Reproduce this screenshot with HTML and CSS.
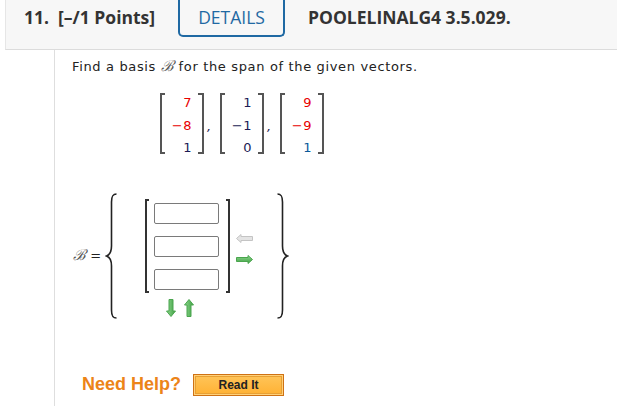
FILE: index.html
```html
<!DOCTYPE html>
<html>
<head>
<meta charset="utf-8">
<link rel="stylesheet" href="styles.css">
</head>
<body>
<div class="header">
  <span class="hnum">11.</span>
  <span class="hpts">[–/1 Points]</span>
  <span class="details">DETAILS</span>
  <span class="hcode">POOLELINALG4 3.5.029.</span>
</div>
<div class="content">
  <p class="question">Find a basis <span class="scriptb">ℬ</span> for the span of the given vectors.</p>
  <div class="vectors">
    <div class="matrix">
      <span class="lb"></span>
      <div class="col"><span class="red">7</span><span class="red">−8</span><span class="navy">1</span></div>
      <span class="rb"></span>
    </div>
    <span class="comma">,</span>
    <div class="matrix">
      <span class="lb"></span>
      <div class="col"><span class="navy">1</span><span class="navy">−1</span><span class="navy">0</span></div>
      <span class="rb"></span>
    </div>
    <span class="comma">,</span>
    <div class="matrix">
      <span class="lb"></span>
      <div class="col"><span class="red">9</span><span class="red">−9</span><span class="blue">1</span></div>
      <span class="rb"></span>
    </div>
  </div>
  <div class="answer">
    <div class="label"><span class="scriptb">ℬ</span> <span class="eq">=</span></div>
    <svg class="brace" width="14" height="126" viewBox="0 0 14 126"><path d="M11.5 1 C7.5 1 6.5 3.5 6.5 9 L6.5 53 C6.5 59 4.5 62 1.5 63 C4.5 64 6.5 67 6.5 73 L6.5 117 C6.5 122.5 7.5 125 11.5 125" fill="none" stroke="#222" stroke-width="1.6"/></svg>
    <div class="block">
      <div class="brow">
        <div class="bracket">
          <span class="blb"></span>
          <div class="inputs">
            <span class="box"></span>
            <span class="box"></span>
            <span class="box"></span>
          </div>
          <span class="brb"></span>
        </div>
        <div class="sidearrows">
          <svg width="17" height="9" viewBox="0 0 17 9"><path d="M0.5 4.5 L5 0.5 L5 2.5 L16.5 2.5 L16.5 6.5 L5 6.5 L5 8.5 Z" fill="#e4e4e4" stroke="#c4c4c4" stroke-width="1"/></svg>
          <svg width="17" height="9" viewBox="0 0 17 9"><defs><linearGradient id="gr" x1="0" y1="0" x2="0" y2="1"><stop offset="0" stop-color="#8fd88f"/><stop offset="1" stop-color="#3f9f43"/></linearGradient></defs><path d="M16.5 4.5 L12 0.5 L12 2.5 L0.5 2.5 L0.5 6.5 L12 6.5 L12 8.5 Z" fill="url(#gr)" stroke="#4aa54e" stroke-width="1"/></svg>
        </div>
      </div>
      <div class="updown">
        <svg width="10" height="18" viewBox="0 0 10 18"><defs><linearGradient id="gv" x1="0" y1="0" x2="1" y2="0"><stop offset="0" stop-color="#8fd88f"/><stop offset="1" stop-color="#3f9f43"/></linearGradient></defs><path d="M5 17.5 L0.5 12 L3 12 L3 0.5 L7 0.5 L7 12 L9.5 12 Z" fill="url(#gv)" stroke="#4aa54e" stroke-width="1"/></svg>
        <svg width="10" height="18" viewBox="0 0 10 18"><path d="M5 0.5 L0.5 6 L3 6 L3 17.5 L7 17.5 L7 6 L9.5 6 Z" fill="url(#gv)" stroke="#4aa54e" stroke-width="1"/></svg>
      </div>
    </div>
    <svg class="brace rbrace" width="14" height="126" viewBox="0 0 14 126"><path d="M2.5 1 C6.5 1 7.5 3.5 7.5 9 L7.5 53 C7.5 59 9.5 62 12.5 63 C9.5 64 7.5 67 7.5 73 L7.5 117 C7.5 122.5 6.5 125 2.5 125" fill="none" stroke="#222" stroke-width="1.6"/></svg>
  </div>
  <div class="help">
    <span class="needhelp">Need Help?</span>
    <span class="readit">Read It</span>
  </div>
</div>
</body>
</html>
```

FILE: styles.css
```css
html, body {
  margin: 0;
  padding: 0;
  background: #fff;
}
body {
  width: 617px;
  height: 406px;
  overflow: hidden;
}
.header {
  margin-left: 5px;
  height: 49px;
  background: #f7f7f7;
  border-left: 1px solid #e6e6e6;
  border-bottom: 1px solid #dcdcdc;
  display: flex;
  align-items: flex-start;
  font-family: "Open Sans", sans-serif;
  font-size: 17.5px;
  color: #333;
  white-space: nowrap;
}
.hnum, .hpts, .hcode {
  font-weight: 700;
  line-height: 34px;
}
.hnum { margin-left: 18px; width: 34px; flex-shrink: 0; }
.hpts { width: 120px; flex-shrink: 0; }
.details {
  width: 103px;
  flex-shrink: 0;
  text-align: center;
  color: #1f69a3;
  font-weight: 400;
  line-height: 34px;
  padding-bottom: 1px;
  border: 2px solid #1f69a3;
  border-top: 0;
  border-radius: 0 0 5px 5px;
}
.hcode { margin-left: 23px; }

.content {
  margin-left: 54px;
  border-left: 1px solid #dedede;
  height: 356px;
  font-family: "DejaVu Sans", Verdana, sans-serif;
  font-size: 13px;
  color: #222;
}
.question {
  margin: 0;
  padding: 7px 0 0 17px;
  line-height: 18px;
  letter-spacing: 0.65px;
  white-space: nowrap;
}
.scriptb {
  color: #555;
  font-family: "DejaVu Serif", serif;
  font-style: italic;
  font-weight: 400;
  font-size: 15px;
  letter-spacing: 0;
}
.vectors {
  display: flex;
  align-items: flex-start;
  margin: 16px 0 0 105px;
}
.matrix {
  display: flex;
  align-items: flex-start;
}
.lb, .rb {
  margin-top: 1px;
  height: 57px;
  border: 2px solid #555;
}
.lb { width: 3px; border-right: 0; }
.rb { width: 4px; border-left: 0; }
.col {
  width: 27px;
  padding-right: 6px;
  display: flex;
  flex-direction: column;
  align-items: flex-end;
  line-height: 22.5px;
  letter-spacing: 0.5px;
}
.red { color: #e80000; }
.navy { color: #1c1c55; }
.blue { color: #0a5a9a; }
.comma {
  width: 16px;
  padding-left: 3px;
  box-sizing: border-box;
  color: #1c1c55;
  font-style: italic;
  line-height: 22.5px;
  margin-top: 24px;
}
.answer {
  display: flex;
  align-items: flex-start;
  margin: 33px 0 0 18px;
}
.label {
  margin-top: 52px;
  line-height: 20px;
  width: 32px;
  white-space: nowrap;
}
.eq { color: #222; }
.brace { display: block; }
.block {
  margin: 6px 0 0 26px;
  display: flex;
  flex-direction: column;
}
.brow {
  display: flex;
  align-items: center;
}
.bracket {
  display: flex;
  align-items: stretch;
}
.blb, .brb {
  width: 2px;
  border: 2px solid #333;
}
.blb { border-right: 0; }
.brb { border-left: 0; }
.inputs {
  display: flex;
  flex-direction: column;
  gap: 12px;
  padding: 4px 7px 3px 5px;
}
.box {
  display: block;
  width: 63px;
  height: 19px;
  border: 1px solid #7a7a7a;
  border-radius: 2px;
  background: #fff;
}
.sidearrows {
  display: flex;
  flex-direction: column;
  gap: 12px;
  margin: 7px 0 0 6px;
}
.sidearrows svg { display: block; }
.updown {
  display: flex;
  gap: 8px;
  margin: 6px 0 0 21px;
}
.updown svg { display: block; }
.rbrace { margin-left: 22px; }
.help {
  display: flex;
  align-items: center;
  margin: 55px 0 0 27px;
}
.needhelp {
  font-family: "Liberation Sans", Arial, sans-serif;
  font-weight: 700;
  font-size: 18px;
  color: #ec8418;
}
.readit {
  margin-left: 12px;
  width: 85px;
  height: 16px;
  border: 1px solid #cf7214;
  box-shadow: inset 0 0 0 1px #ffd17a, inset 0 0 0 2px #e8a034;
  background: linear-gradient(#ffc55a, #ffb133);
  padding: 2px;
  font-family: "Liberation Sans", Arial, sans-serif;
  font-weight: 700;
  font-size: 12px;
  line-height: 16px;
  color: #222;
  text-align: center;
}
```
